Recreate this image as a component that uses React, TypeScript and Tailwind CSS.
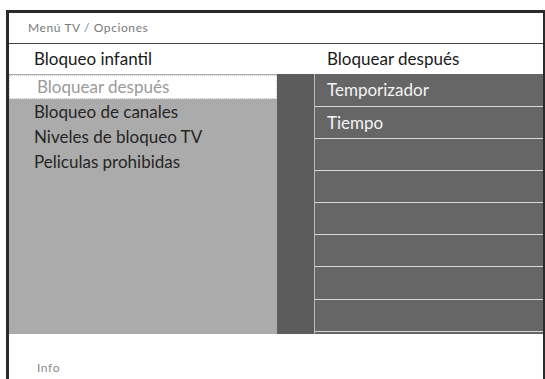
const leftItems = ['Bloqueo de canales', 'Niveles de bloqueo TV', 'Peliculas prohibidas']
const rightItems = ['Temporizador', 'Tiempo', '', '', '', '', '', '']
const rowHeights = [33, 32, 32, 32, 32, 32, 33, 32]

export default function App() {
  return (
    <div className="h-[379px] w-[545px] overflow-hidden bg-white" style={{ fontFamily: 'Lato, "Open Sans", sans-serif' }}>
      <div className="ml-[6px] mt-[10px] flex h-[369px] w-[539px] flex-col border-l-[3px] border-r-[2px] border-t-[3px] border-[#2a2a2a]">
        <div className="flex h-[31px] items-center border-b border-[#444] pl-[19px] text-[12px] tracking-[0.05em] text-[#7a7a7a]">
          Menú TV / Opciones
        </div>
        <div className="flex h-[30px] items-center text-[17px] text-[#1a1a1a]">
          <div className="w-[268px] pl-[25px]">Bloqueo infantil</div>
          <div className="pl-[50px]">Bloquear después</div>
        </div>
        <div className="flex h-[260px]">
          <div className="w-[268px] bg-[#ababab] pt-[1px]">
            <div className="flex h-[24px] items-center border border-dotted border-[#c8c8c8] bg-white pl-[27px] text-[17px] text-[#9a9a9a]">
              Bloquear después
            </div>
            {leftItems.map((t) => (
              <div key={t} className="flex h-[25px] items-center pl-[25px] text-[17px] text-[#262626]">
                {t}
              </div>
            ))}
          </div>
          <div className="flex flex-1 bg-[#666]">
            <div className="w-[38px] border-r border-[#bdbdbd] bg-[#5c5c5c]" />
            <div className="flex-1">
              {rightItems.map((t, i) => (
                <div
                  key={i}
                  className="flex items-center border-b border-[#d6d6d6] pl-[12px] text-[17px] text-[#f4f4f4]"
                  style={{ height: rowHeights[i] }}
                >
                  {t}
                </div>
              ))}
            </div>
          </div>
        </div>
        <div className="flex flex-1 items-end pb-[2px] pl-[28px] text-[12px] tracking-[0.05em] text-[#8a8a8a]">Info</div>
      </div>
    </div>
  )
}
